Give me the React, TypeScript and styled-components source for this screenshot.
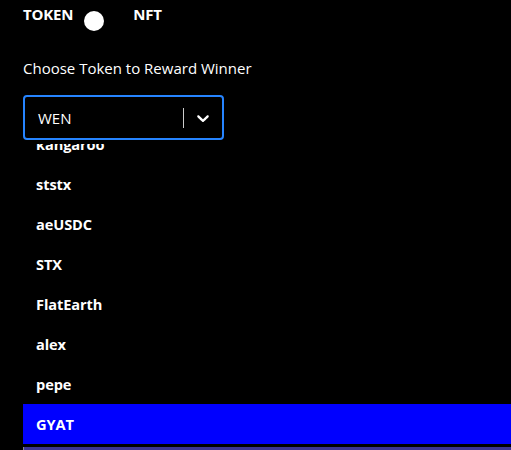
import { useEffect, useRef } from "react";
import styled, { createGlobalStyle } from "styled-components";

const GlobalStyle = createGlobalStyle`
    html, body {
        margin: 0;
        padding: 0;
        background: #000;
        overflow: hidden;
    }
    body {
        font-family: "Open Sans", "Noto Sans", sans-serif;
        color: #fff;
    }
`;

const Page = styled.div`
    padding: 4px 0 0 23px;
    height: 446px;
    overflow: hidden;
`;

const ToggleRow = styled.div`
    display: flex;
    align-items: flex-start;
    height: 30px;
`;

const ToggleLabel = styled.span`
    font-size: 15px;
    font-weight: 700;
    line-height: 20px;
    letter-spacing: -0.2px;
`;

const Track = styled.div`
    width: 40px;
    height: 20px;
    margin: 7px 9px 0 11px;
    border-radius: 10px;
    background: #000;
    position: relative;
`;

const Knob = styled.div<{ $on: boolean }>`
    position: absolute;
    top: 0;
    left: ${p => (p.$on ? "20px" : "0")};
    width: 20px;
    height: 20px;
    border-radius: 50%;
    background: #fff;
`;

const Label = styled.div`
    margin-top: 24px;
    font-size: 15px;
    line-height: 20px;
`;

const Control = styled.div`
    margin-top: 17px;
    width: 201px;
    height: 45px;
    box-sizing: border-box;
    border: 2px solid #2684ff;
    border-radius: 4px;
    display: flex;
    align-items: center;
`;

const Value = styled.div`
    flex: 1;
    padding-left: 13px;
    font-size: 15px;
`;

const Separator = styled.span`
    width: 1px;
    height: 20px;
    background: #ccc;
`;

const Indicator = styled.div`
    width: 38px;
    display: flex;
    justify-content: center;
    align-items: center;
    color: #fff;
`;

const Menu = styled.div`
    margin-top: 4px;
    width: 560px;
    height: 320px;
    overflow: hidden;
`;

const Option = styled.div<{ $selected?: boolean }>`
    height: 40px;
    display: flex;
    align-items: center;
    padding-left: 13px;
    font-size: 14.6px;
    font-weight: 700;
    letter-spacing: -0.1px;
    background: ${p => (p.$selected ? "#0000ff" : "transparent")};
`;

const NextOption = styled(Option)`
    margin-top: 3px;
    background: #3b3494;
    border-left: 1px solid #888;
`;

const tokens = ["kangaroo", "ststx", "aeUSDC", "STX", "FlatEarth", "alex", "pepe", "GYAT"];

export default function App() {
    const menuRef = useRef<HTMLDivElement>(null);

    useEffect(() => {
        if (menuRef.current) menuRef.current.scrollTop = 20;
    }, []);

    return (
        <>
            <GlobalStyle />
            <Page>
                <ToggleRow>
                    <ToggleLabel>TOKEN</ToggleLabel>
                    <Track>
                        <Knob $on={false} />
                    </Track>
                    <ToggleLabel>NFT</ToggleLabel>
                </ToggleRow>
                <Label>Choose Token to Reward Winner</Label>
                <Control>
                    <Value>WEN</Value>
                    <Separator />
                    <Indicator>
                        <svg width="20" height="20" viewBox="0 0 20 20" fill="currentColor">
                            <path d="M4.516 7.548c0.436-0.446 1.043-0.481 1.576 0l3.908 3.747 3.908-3.747c0.533-0.481 1.141-0.446 1.574 0 0.436 0.445 0.408 1.197 0 1.615-0.406 0.418-4.695 4.502-4.695 4.502-0.217 0.223-0.502 0.335-0.787 0.335s-0.57-0.112-0.789-0.335c0 0-4.287-4.084-4.695-4.502s-0.436-1.17 0-1.615z" />
                        </svg>
                    </Indicator>
                </Control>
                <Menu ref={menuRef}>
                    {tokens.map(t => (
                        <Option key={t} $selected={t === "GYAT"}>{t}</Option>
                    ))}
                    <NextOption>WEN</NextOption>
                </Menu>
            </Page>
        </>
    );
}
